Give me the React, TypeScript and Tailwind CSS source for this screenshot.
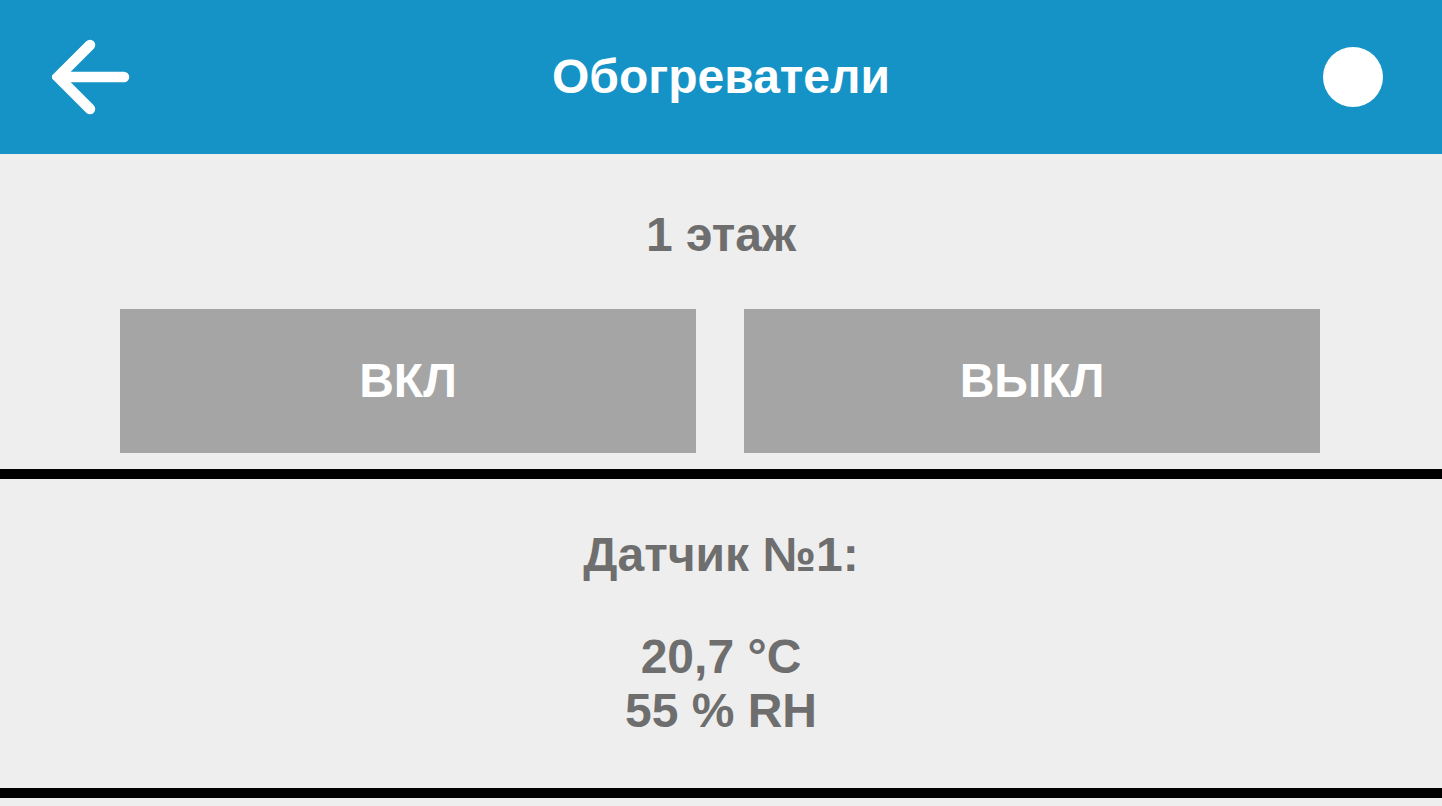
const font = { fontFamily: '"Liberation Sans", Arial, sans-serif' };

function BackArrow() {
  return (
    <svg width="80" height="80" viewBox="0 0 80 80" fill="none">
      <path
        d="M6 40 H72 M38 8 L6 40 L38 72"
        stroke="white"
        strokeWidth="10.5"
        strokeLinecap="round"
        strokeLinejoin="miter"
      />
    </svg>
  );
}

function Divider() {
  return <div className="h-[10px] w-full bg-black" />;
}

export default function App() {
  return (
    <div
      className="w-[1442px] h-[806px] overflow-hidden bg-[#eeeeee] flex flex-col"
      style={font}
    >
      {/* header */}
      <header className="h-[154px] shrink-0 bg-[#1593c6] grid grid-cols-[1fr_auto_1fr] items-center">
        <div className="pl-[52px] flex items-center">
          <BackArrow />
        </div>
        <h1 className="text-white font-bold text-[48px] leading-none">
          Обогреватели
        </h1>
        <div className="flex justify-end pr-[59px]">
          <div className="w-[60px] h-[60px] rounded-full bg-white" />
        </div>
      </header>

      {/* floor controls */}
      <section className="pt-[54px] pb-[16px] flex flex-col items-center">
        <h2 className="text-[#6e6e6e] font-bold text-[48px] leading-[54px]">
          1 этаж
        </h2>
        <div className="mt-[47px] self-start ml-[120px] grid grid-cols-[576px_576px] gap-[48px]">
          <button className="h-[144px] bg-[#a5a5a5] text-white font-bold text-[48px]">
            ВКЛ
          </button>
          <button className="h-[144px] bg-[#a5a5a5] text-white font-bold text-[48px]">
            ВЫКЛ
          </button>
        </div>
      </section>
      <Divider />

      {/* sensor */}
      <section className="pt-[49px] pb-[50px] flex flex-col items-center text-[#6e6e6e] font-bold text-[48px] leading-[54px]">
        <div>Датчик №1:</div>
        <div className="mt-[48px] text-center">
          <div>20,7 °C</div>
          <div>55 % RH</div>
        </div>
      </section>
      <Divider />
    </div>
  );
}
